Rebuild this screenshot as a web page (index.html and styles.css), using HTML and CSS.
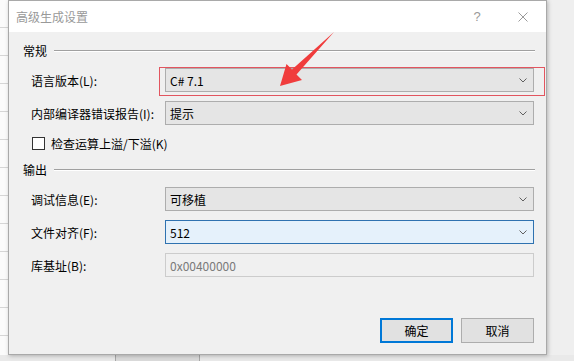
FILE: index.html
```html
<!DOCTYPE html>
<html lang="zh-CN">
<head>
  <meta charset="UTF-8" />
  <title>高级生成设置</title>
  <link rel="stylesheet" href="styles.css">
</head>
<body>
  <div class="desktop">
    <div class="top">
      <div class="side-list"></div>

      <div class="dialog">
        <div class="titlebar">
          <span class="title">高级生成设置</span>
          <span class="tb-btn help">?</span>
          <span class="tb-btn close">
            <svg width="10" height="10" viewBox="0 0 10 10">
              <path d="M0.5 0.5 L9.5 9.5 M9.5 0.5 L0.5 9.5" stroke="#9a9a9a" stroke-width="1" fill="none"/>
            </svg>
          </span>
        </div>

        <div class="body">
          <div class="group-head"><span>常规</span><i class="rule"></i></div>

          <div class="field">
            <label>语言版本(L):</label>
            <div class="combo marked">
              <span>C# 7.1</span>
              <svg class="chev" width="8" height="5" viewBox="0 0 8 5"><polyline points="0.5,0.5 4,4 7.5,0.5" fill="none" stroke="#606060"/></svg>
              <div class="highlight"></div>
            </div>
          </div>

          <div class="field">
            <label>内部编译器错误报告(I):</label>
            <div class="combo">
              <span>提示</span>
              <svg class="chev" width="8" height="5" viewBox="0 0 8 5"><polyline points="0.5,0.5 4,4 7.5,0.5" fill="none" stroke="#606060"/></svg>
            </div>
          </div>

          <div class="check-row">
            <span class="checkbox"></span>
            <span>检查运算上溢/下溢(K)</span>
          </div>

          <div class="group-head second"><span>输出</span><i class="rule"></i></div>

          <div class="field">
            <label>调试信息(E):</label>
            <div class="combo">
              <span>可移植</span>
              <svg class="chev" width="8" height="5" viewBox="0 0 8 5"><polyline points="0.5,0.5 4,4 7.5,0.5" fill="none" stroke="#606060"/></svg>
            </div>
          </div>

          <div class="field">
            <label>文件对齐(F):</label>
            <div class="combo hot">
              <span>512</span>
              <svg class="chev" width="8" height="5" viewBox="0 0 8 5"><polyline points="0.5,0.5 4,4 7.5,0.5" fill="none" stroke="#606060"/></svg>
            </div>
          </div>

          <div class="field">
            <label>库基址(B):</label>
            <div class="textbox disabled">0x00400000</div>
          </div>

          <div class="buttons">
            <button class="btn default">确定</button>
            <button class="btn">取消</button>
          </div>
        </div>
      </div>
    </div>

    <div class="bottom">
      <div class="tab"></div>
    </div>

    <svg class="arrow" width="574" height="361" viewBox="0 0 574 361">
      <polygon points="334,32 296.5,74.5 302,80 280,86 286.5,64 292,69.5" fill="#f03c3c"/>
    </svg>
  </div>
</body>
</html>
```

FILE: styles.css
```css
body {
  margin: 0;
  background: #efefef;
  font-family: "Noto Sans CJK SC", "Noto Sans", sans-serif;
  font-size: 12px;
  color: #000;
}

.desktop {
  position: relative;
  width: 574px;
  height: 361px;
  overflow: hidden;
}

.top {
  display: flex;
  height: 355px;
}

.side-list {
  width: 8px;
  flex-shrink: 0;
  background:
    repeating-linear-gradient(to bottom, #fbfbfb 0, #fbfbfb 27px, #d6d6d6 27px, #d6d6d6 28px);
  border-right: 1px solid #cfcfcf;
  margin-right: -1px;
}

.dialog {
  width: 537px;
  height: 353px;
  flex-shrink: 0;
  display: flex;
  flex-direction: column;
  border: 1px solid #a9a9a9;
  background: #f0f0f0;
  box-shadow: 1px 1px 4px rgba(0, 0, 0, 0.25);
  position: relative;
  z-index: 1;
}

.titlebar {
  height: 31px;
  background: #fff;
  display: flex;
  align-items: center;
  padding-left: 7px;
}

.title {
  flex: 1;
  color: #999;
  font-size: 12px;
}

.tb-btn {
  width: 46px;
  height: 31px;
  display: flex;
  align-items: center;
  justify-content: center;
  color: #999;
}

.help {
  font-family: "Liberation Sans", sans-serif;
  font-size: 13px;
}

.body {
  flex: 1;
  display: flex;
  flex-direction: column;
  padding: 11px 12px 11px 14px;
}

.group-head {
  display: flex;
  align-items: center;
  height: 16px;
  line-height: 16px;
}

.group-head .rule {
  flex: 1;
  height: 0;
  border-top: 1px solid #a0a0a0;
  border-bottom: 1px solid #fff;
  margin-left: 7px;
  margin-right: -1px;
}

.group-head.second {
  margin-top: 11px;
}

.field {
  display: grid;
  grid-template-columns: 134px 1fr;
  align-items: center;
  margin-top: 9px;
  padding-left: 8px;
}

.combo, .textbox {
  position: relative;
  height: 22px;
  display: flex;
  align-items: center;
  padding: 0 4px;
  border: 1px solid #adadad;
  background: #e5e5e5;
}

.combo span {
  flex: 1;
}

.combo.hot {
  background: #e5f1fb;
  border-color: #2f72b0;
}

.textbox.disabled {
  background: #f0f0f0;
  border-color: #cccccc;
  color: #7a7a7a;
}

.chev {
  margin-right: 2px;
}

.highlight {
  position: absolute;
  left: -7px;
  top: -2px;
  right: -12px;
  bottom: -5px;
  border: 1px solid #e2555f;
}

.check-row {
  display: flex;
  align-items: center;
  height: 16px;
  margin-top: 10px;
  padding-left: 9px;
}

.checkbox {
  width: 11px;
  height: 11px;
  border: 1px solid #333;
  background: #fff;
  margin-right: 6px;
}

.buttons {
  margin-top: auto;
  display: flex;
  justify-content: flex-end;
  gap: 8px;
}

.btn {
  width: 73px;
  height: 25px;
  font-family: inherit;
  font-size: 12px;
  color: #000;
  background: #e1e1e1;
  border: 1px solid #adadad;
  padding: 0;
}

.btn.default {
  border: 2px solid #0078d7;
}

.bottom {
  height: 6px;
  background: #e9e9e9;
}

.tab {
  margin-left: 115px;
  width: 83px;
  height: 6px;
  background: #dadada;
  border-left: 1px solid #a8a8a8;
  border-right: 1px solid #a8a8a8;
}

.arrow {
  position: absolute;
  left: 0;
  top: 0;
  z-index: 2;
  pointer-events: none;
}
```
